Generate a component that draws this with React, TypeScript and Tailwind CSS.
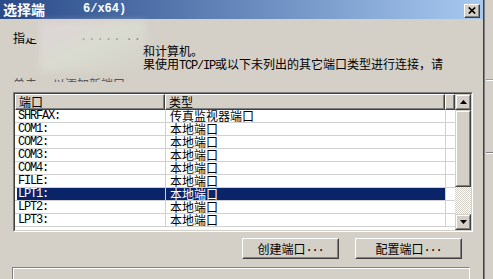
import React from "react";

const MONO = "font-['Liberation_Mono',monospace] text-[12px] tracking-[-1.2px]";

const rows: [string, string][] = [
  ["SHRFAX:", "传真监视器端口"],
  ["COM1:", "本地端口"],
  ["COM2:", "本地端口"],
  ["COM3:", "本地端口"],
  ["COM4:", "本地端口"],
  ["FILE:", "本地端口"],
  ["LPT1:", "本地端口"],
  ["LPT2:", "本地端口"],
  ["LPT3:", "本地端口"],
];

function ScrollButton({ down }: { down?: boolean }) {
  return (
    <div className="w-[16px] h-[16px] shrink-0 border border-t-[#d4d0c8] border-l-[#d4d0c8] border-r-[#404040] border-b-[#404040] bg-[#d4d0c8]">
      <div className="w-full h-full border border-t-white border-l-white border-r-[#808080] border-b-[#808080] flex items-center justify-center">
        <svg width="7" height="4" viewBox="0 0 7 4">
          {down ? (
            <path d="M0 0H7L3.5 4Z" fill="#000" />
          ) : (
            <path d="M0 4H7L3.5 0Z" fill="#000" />
          )}
        </svg>
      </div>
    </div>
  );
}

function HeaderCell({ w, label }: { w: string; label?: string }) {
  return (
    <div
      className={`${w} h-[16px] shrink-0 border border-t-white border-l-white border-r-[#404040] border-b-[#404040] bg-[#d4d0c8]`}
    >
      <div className="h-full border-r border-b border-r-[#808080] border-b-[#808080] pl-[3px] leading-[13px] whitespace-nowrap overflow-hidden">
        {label}
      </div>
    </div>
  );
}

function Button({ w, label }: { w: string; label: string }) {
  return (
    <div
      className={`${w} h-[21px] border border-t-white border-l-white border-r-[#404040] border-b-[#404040] bg-[#d4d0c8]`}
    >
      <div className="w-full h-full border border-t-[#d4d0c8] border-l-[#d4d0c8] border-r-[#808080] border-b-[#808080] flex items-center justify-center leading-[13px] whitespace-nowrap">
        {label}
        <span className={MONO}>...</span>
      </div>
    </div>
  );
}

export default function App() {
  return (
    <div className="w-[493px] h-[279px] overflow-hidden bg-[#d4d0c8] flex font-['Noto_Sans_CJK_SC',sans-serif] text-[12px] leading-[13px] text-black">
      <div className="w-[483px] shrink-0 flex flex-col">
        {/* title bar */}
        <div className="h-[19px] shrink-0 flex items-start bg-gradient-to-r from-[#2a4a88] to-[#a8caf0] pl-[3px] pr-[3px]">
          <span className="mt-[2px] text-white font-bold text-[14px] leading-[15px]">选择端</span>
          <span className="ml-[38px] mt-[3px] text-white font-bold font-['Liberation_Mono',monospace] text-[12px] leading-[13px]">
            6/x64)
          </span>
          <div className="ml-auto mt-[4px] w-[16px] h-[14px] border border-t-white border-l-white border-r-[#404040] border-b-[#404040] bg-[#d4d0c8]">
            <div className="w-full h-full border-r border-b border-r-[#808080] border-b-[#808080] flex items-center justify-center">
              <svg width="8" height="7" viewBox="0 0 8 7">
                <path d="M0.8 0.5L7.2 6.5M7.2 0.5L0.8 6.5" stroke="#000" strokeWidth="1.7" />
              </svg>
            </div>
          </div>
        </div>

        {/* body */}
        <div className="relative flex-1 flex flex-col">
          <div className="h-[73px] shrink-0 flex flex-col pt-[12px]">
            <div className="h-[13px] flex items-end whitespace-nowrap">
              <span className="ml-[13px]">指</span>
              <span className="w-[12px] h-[13px] overflow-hidden flex flex-col justify-end">
                <span className="h-[6px] overflow-hidden flex flex-col justify-end">
                  <span>定</span>
                </span>
              </span>
              <span className="ml-[43px] font-['Liberation_Mono',monospace] text-[12px] tracking-[1.1px] text-[#444]">
                .....
              </span>
              <span className="ml-[4px] font-['Liberation_Mono',monospace] text-[12px] tracking-[1.1px] text-[#444]">
                ..
              </span>
            </div>
            <div className="h-[13px] pl-[143px] whitespace-nowrap">和计算机。</div>
            <div className="h-[13px] pl-[143px] whitespace-nowrap">
              果使用<span className={MONO}>TCP/IP</span>或以下未列出的其它端口类型进行连接，请
            </div>
            <div className="mt-[7px] h-[5px] overflow-hidden pl-[13px] whitespace-nowrap text-[#555]">
              <span>单击</span>
              <span className="ml-[16px]">以添加新端口</span>
            </div>
          </div>

          {/* smeared / erased area */}
          <div className="absolute left-[40px] top-[2px] w-[105px] h-[50px] bg-gradient-to-br from-[#e6d6e2] via-[#dde3d6] to-transparent opacity-60 blur-[3px]" />

          {/* list */}
          <div className="ml-[13px] w-[460px] h-[140px] shrink-0 border border-t-[#808080] border-l-[#808080] border-b-white border-r-white">
            <div className="w-full h-full border border-t-[#404040] border-l-[#404040] border-b-[#d4d0c8] border-r-[#d4d0c8] bg-white flex">
              <div className="w-[440px] shrink-0 flex flex-col">
                <div className="flex">
                  <HeaderCell w="w-[150px]" label="端口" />
                  <HeaderCell w="w-[280px]" label="类型" />
                  <HeaderCell w="w-[10px]" />
                </div>
                {rows.map(([port, type]) => {
                  const sel = port === "LPT1:";
                  return (
                    <div key={port} className="h-[13px] flex border-b border-b-[#d0d0d0]">
                      <div className="w-[150px] shrink-0 pl-[2px]">
                        <div
                          className={`h-full pl-[1px] leading-[12px] ${MONO} ${
                            sel ? "bg-[#0a246a] text-white" : ""
                          }`}
                        >
                          {port}
                        </div>
                      </div>
                      <div
                        className={`w-[280px] shrink-0 border-l border-l-[#d0d0d0] pl-[4px] leading-[12px] whitespace-nowrap ${
                          sel ? "bg-[#0a246a] text-white" : ""
                        }`}
                      >
                        {type}
                      </div>
                      <div className="w-[10px] shrink-0 border-l border-l-[#d0d0d0]" />
                    </div>
                  );
                })}
              </div>
              {/* scrollbar */}
              <div className="w-[16px] shrink-0 flex flex-col">
                <ScrollButton />
                <div className="h-[77px] shrink-0 border border-t-[#d4d0c8] border-l-[#d4d0c8] border-r-[#404040] border-b-[#404040] bg-[#d4d0c8]">
                  <div className="w-full h-full border border-t-white border-l-white border-r-[#808080] border-b-[#808080]" />
                </div>
                <div className="flex-1 bg-[image:repeating-conic-gradient(#ffffff_0_25%,#d4d0c8_0_50%)] bg-[length:2px_2px]" />
                <ScrollButton down />
              </div>
            </div>
          </div>

          {/* buttons */}
          <div className="mt-[6px] ml-[242px] flex gap-[16px] shrink-0">
            <Button w="w-[97px]" label="创建端口" />
            <Button w="w-[107px]" label="配置端口" />
          </div>

          {/* bottom panel */}
          <div className="mt-[8px] ml-[12px] w-[458px] flex-1 border-t border-l border-t-[#808080] border-l-[#808080] border-r border-r-white">
            <div className="h-full border-t border-l border-t-white border-l-white" />
          </div>
        </div>
      </div>

      {/* right strip: window behind */}
      <div className="flex-1 flex border-l border-l-[#404040]">
        <div className="flex-1 flex flex-col border-l border-l-[#808080] pl-[1px]">
          <div className="h-[79px] shrink-0" />
          <div className="h-[2px] shrink-0 border-t border-t-[#a0a0a0] border-b border-b-white" />
          <div className="h-[71px] shrink-0" />
          <div className="h-[2px] shrink-0 border-t border-t-[#808080] border-b border-b-white" />
          <div className="flex-1" />
        </div>
      </div>
    </div>
  );
}
